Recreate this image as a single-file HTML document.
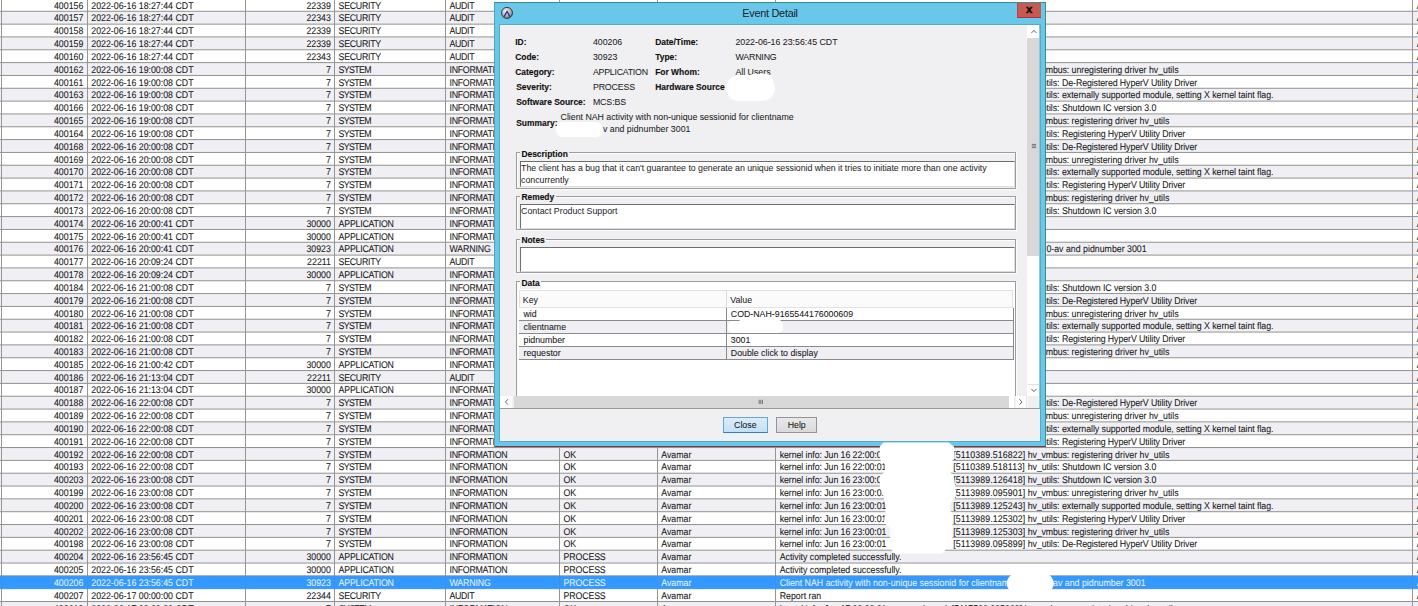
<!DOCTYPE html>
<html lang="en"><head><meta charset="utf-8"><title>Event Detail</title>
<style>
html,body{margin:0;padding:0;background:#fff;}
body{width:1418px;height:606px;overflow:hidden;position:relative;font-family:"Liberation Sans",sans-serif;font-size:8.8px;color:#181818;-webkit-text-stroke:0.07px currentColor;}
#grid{position:absolute;left:0;top:0;width:1418px;height:606px;overflow:hidden;}
#gridbg{position:absolute;left:0;top:0;}
.r{position:absolute;left:0;width:1418px;height:12.83px;white-space:nowrap;transform:scaleY(1.1);text-rendering:geometricPrecision;transform-origin:0 9.46px;}
.r.sel{color:#e6f1ff;-webkit-text-stroke:0.05px currentColor;}
.c{position:absolute;top:0;height:100%;line-height:12.83px;overflow:hidden;box-sizing:border-box;}
.c span{position:absolute;top:0;}

#dlg{position:absolute;left:494px;top:2px;width:552px;height:444.6px;background:#69c8ea;box-sizing:border-box;border:1px solid #3a8c90;border-left-color:#4fa6bb;border-bottom-color:#7a3a4a;}
#ttl{position:absolute;left:494px;top:5.6px;width:552px;text-align:center;font-size:10.9px;line-height:15px;color:#161e2a;letter-spacing:-0.27px;-webkit-text-stroke:0;}
#close{position:absolute;left:1017.3px;top:2.6px;width:24.2px;height:15.5px;background:#c75a50;color:#0c0c0c;text-align:center;text-indent:-1.4px;font-weight:bold;font-size:11.5px;line-height:13px;box-sizing:border-box;border-left:1px solid #b8405a;border-bottom:1px solid #c0284a;-webkit-text-stroke:0.4px currentColor;}
#pane{position:absolute;left:500.3px;top:24.5px;width:539.7px;height:416.5px;background:#f0eff1;overflow:hidden;box-shadow:0 0 0 0.6px #4a9aa6;}
#view{position:absolute;left:0;top:0;width:527.3px;height:371.7px;overflow:hidden;}
.lb{position:absolute;font-weight:bold;font-size:8.45px;white-space:nowrap;line-height:11px;color:#101010;-webkit-text-stroke:0.12px currentColor;}
.vv{position:absolute;white-space:nowrap;line-height:11px;color:#1a1a1a;-webkit-text-stroke:0.04px currentColor;}
.grp{position:absolute;box-sizing:border-box;border:1px solid #9c9c9c;box-shadow:inset 1px 1px 0 0 #fbfbfb, 1px 1px 0 0 #fbfbfb;}
.grp > b{position:absolute;left:3.0px;top:-4.5px;line-height:11px;font-size:8.45px;background:#f0eff1;padding:0 1.4px 0 1.2px;color:#101010;-webkit-text-stroke:0.12px currentColor;}
.ta{position:absolute;box-sizing:border-box;background:#fff;border-top:1.3px solid #6e6e6e;border-left:1.3px solid #6e6e6e;border-right:1px solid #dcdcdc;border-bottom:1px solid #dcdcdc;line-height:11.7px;padding:0.7px 0 0 0.4px;white-space:nowrap;overflow:hidden;color:#1e1e1e;-webkit-text-stroke:0.03px currentColor;}
.blob{position:absolute;background:#fff;border-radius:7px;}
.dr{position:absolute;left:0;width:494.2px;height:12.95px;box-sizing:border-box;border-bottom:1px solid #8a8a8a;background:#fff;line-height:13.8px;white-space:nowrap;}
.dr.g{background:#f0eff4;}
.dr i{font-style:normal;position:absolute;left:4.3px;top:0;}
.dr u{text-decoration:none;position:absolute;left:211.6px;top:0;}
.btn{position:absolute;box-sizing:border-box;text-align:center;line-height:15.2px;color:#1a1a1a;}
</style></head><body>
<div id="grid">
<svg id="gridbg" width="1418" height="606" viewBox="0 0 1418 606" shape-rendering="auto"><rect x="0" y="11.79" width="1418" height="11.83" fill="#f0eff4"/><rect x="0" y="37.45" width="1418" height="11.83" fill="#f0eff4"/><rect x="0" y="63.11" width="1418" height="11.83" fill="#f0eff4"/><rect x="0" y="88.78" width="1418" height="11.83" fill="#f0eff4"/><rect x="0" y="114.44" width="1418" height="11.83" fill="#f0eff4"/><rect x="0" y="140.1" width="1418" height="11.83" fill="#f0eff4"/><rect x="0" y="165.76" width="1418" height="11.83" fill="#f0eff4"/><rect x="0" y="191.42" width="1418" height="11.83" fill="#f0eff4"/><rect x="0" y="217.09" width="1418" height="11.83" fill="#f0eff4"/><rect x="0" y="242.75" width="1418" height="11.83" fill="#f0eff4"/><rect x="0" y="268.41" width="1418" height="11.83" fill="#f0eff4"/><rect x="0" y="294.07" width="1418" height="11.83" fill="#f0eff4"/><rect x="0" y="319.73" width="1418" height="11.83" fill="#f0eff4"/><rect x="0" y="345.4" width="1418" height="11.83" fill="#f0eff4"/><rect x="0" y="371.06" width="1418" height="11.83" fill="#f0eff4"/><rect x="0" y="396.72" width="1418" height="11.83" fill="#f0eff4"/><rect x="0" y="422.38" width="1418" height="11.83" fill="#f0eff4"/><rect x="0" y="448.04" width="1418" height="11.83" fill="#f0eff4"/><rect x="0" y="473.71" width="1418" height="11.83" fill="#f0eff4"/><rect x="0" y="499.37" width="1418" height="11.83" fill="#f0eff4"/><rect x="0" y="525.03" width="1418" height="11.83" fill="#f0eff4"/><rect x="0" y="550.69" width="1418" height="11.83" fill="#f0eff4"/><rect x="0" y="576.35" width="1418" height="11.83" fill="#f0eff4"/><rect x="0" y="602.02" width="1418" height="11.83" fill="#f0eff4"/><rect x="0" y="10.79" width="1418" height="1" fill="#909090"/><rect x="0" y="23.62" width="1418" height="1" fill="#909090"/><rect x="0" y="36.45" width="1418" height="1" fill="#909090"/><rect x="0" y="49.28" width="1418" height="1" fill="#909090"/><rect x="0" y="62.11" width="1418" height="1" fill="#909090"/><rect x="0" y="74.94" width="1418" height="1" fill="#909090"/><rect x="0" y="87.78" width="1418" height="1" fill="#909090"/><rect x="0" y="100.61" width="1418" height="1" fill="#909090"/><rect x="0" y="113.44" width="1418" height="1" fill="#909090"/><rect x="0" y="126.27" width="1418" height="1" fill="#909090"/><rect x="0" y="139.1" width="1418" height="1" fill="#909090"/><rect x="0" y="151.93" width="1418" height="1" fill="#909090"/><rect x="0" y="164.76" width="1418" height="1" fill="#909090"/><rect x="0" y="177.59" width="1418" height="1" fill="#909090"/><rect x="0" y="190.42" width="1418" height="1" fill="#909090"/><rect x="0" y="203.25" width="1418" height="1" fill="#909090"/><rect x="0" y="216.09" width="1418" height="1" fill="#909090"/><rect x="0" y="228.92" width="1418" height="1" fill="#909090"/><rect x="0" y="241.75" width="1418" height="1" fill="#909090"/><rect x="0" y="254.58" width="1418" height="1" fill="#909090"/><rect x="0" y="267.41" width="1418" height="1" fill="#909090"/><rect x="0" y="280.24" width="1418" height="1" fill="#909090"/><rect x="0" y="293.07" width="1418" height="1" fill="#909090"/><rect x="0" y="305.9" width="1418" height="1" fill="#909090"/><rect x="0" y="318.73" width="1418" height="1" fill="#909090"/><rect x="0" y="331.56" width="1418" height="1" fill="#909090"/><rect x="0" y="344.4" width="1418" height="1" fill="#909090"/><rect x="0" y="357.23" width="1418" height="1" fill="#909090"/><rect x="0" y="370.06" width="1418" height="1" fill="#909090"/><rect x="0" y="382.89" width="1418" height="1" fill="#909090"/><rect x="0" y="395.72" width="1418" height="1" fill="#909090"/><rect x="0" y="408.55" width="1418" height="1" fill="#909090"/><rect x="0" y="421.38" width="1418" height="1" fill="#909090"/><rect x="0" y="434.21" width="1418" height="1" fill="#909090"/><rect x="0" y="447.04" width="1418" height="1" fill="#909090"/><rect x="0" y="459.88" width="1418" height="1" fill="#909090"/><rect x="0" y="472.71" width="1418" height="1" fill="#909090"/><rect x="0" y="485.54" width="1418" height="1" fill="#909090"/><rect x="0" y="498.37" width="1418" height="1" fill="#909090"/><rect x="0" y="511.2" width="1418" height="1" fill="#909090"/><rect x="0" y="524.03" width="1418" height="1" fill="#909090"/><rect x="0" y="536.86" width="1418" height="1" fill="#909090"/><rect x="0" y="549.69" width="1418" height="1" fill="#909090"/><rect x="0" y="562.52" width="1418" height="1" fill="#909090"/><rect x="0" y="575.35" width="1418" height="1" fill="#909090"/><rect x="0" y="588.18" width="1418" height="1" fill="#909090"/><rect x="0" y="601.02" width="1418" height="1" fill="#909090"/><rect x="0" y="613.85" width="1418" height="1" fill="#909090"/><rect x="1" y="0" width="1" height="606" fill="#959595"/><rect x="87" y="0" width="1" height="606" fill="#959595"/><rect x="245" y="0" width="1" height="606" fill="#959595"/><rect x="334" y="0" width="1" height="606" fill="#959595"/><rect x="445" y="0" width="1" height="606" fill="#959595"/><rect x="559" y="0" width="1" height="606" fill="#959595"/><rect x="657" y="0" width="1" height="606" fill="#959595"/><rect x="775" y="0" width="1" height="606" fill="#959595"/><rect x="1412" y="0" width="1" height="606" fill="#959595"/><rect x="0" y="575.9" width="1418" height="12.93" fill="#3399ff"/><rect x="1" y="575.9" width="1" height="12.93" fill="#3e92ee"/><rect x="87" y="575.9" width="1" height="12.93" fill="#3e92ee"/><rect x="245" y="575.9" width="1" height="12.93" fill="#3e92ee"/><rect x="334" y="575.9" width="1" height="12.93" fill="#3e92ee"/><rect x="445" y="575.9" width="1" height="12.93" fill="#3e92ee"/><rect x="559" y="575.9" width="1" height="12.93" fill="#3e92ee"/><rect x="657" y="575.9" width="1" height="12.93" fill="#3e92ee"/><rect x="775" y="575.9" width="1" height="12.93" fill="#3e92ee"/><rect x="1412" y="575.9" width="1" height="12.93" fill="#3e92ee"/></svg>
<div class="r" style="top:-0.44px">
<div class="c" style="left:2px;width:85px;text-align:right;padding-right:3.7px">400156</div>
<div class="c" style="left:88px;width:157px;padding-left:3.3px">2022-06-16 18:27:44 CDT</div>
<div class="c" style="left:246px;width:88px;text-align:right;padding-right:3.1px">22339</div>
<div class="c" style="left:335px;width:110px;padding-left:3.6px;letter-spacing:-0.28px">SECURITY</div>
<div class="c" style="left:446px;width:113px;padding-left:3.5px;letter-spacing:-0.32px">AUDIT</div>
<div class="c" style="left:560px;width:97px;padding-left:3.5px;letter-spacing:-0.2px">USER</div>
<div class="c" style="left:658px;width:117px;padding-left:3.2px">Avamar</div>
<div class="c" style="left:776px;width:636px"></div>
<div class="c" style="left:1413px;width:10px;padding-left:3.7px">Avamar</div>
</div>
<div class="r" style="top:12.39px">
<div class="c" style="left:2px;width:85px;text-align:right;padding-right:3.7px">400157</div>
<div class="c" style="left:88px;width:157px;padding-left:3.3px">2022-06-16 18:27:44 CDT</div>
<div class="c" style="left:246px;width:88px;text-align:right;padding-right:3.1px">22343</div>
<div class="c" style="left:335px;width:110px;padding-left:3.6px;letter-spacing:-0.28px">SECURITY</div>
<div class="c" style="left:446px;width:113px;padding-left:3.5px;letter-spacing:-0.32px">AUDIT</div>
<div class="c" style="left:560px;width:97px;padding-left:3.5px;letter-spacing:-0.2px">USER</div>
<div class="c" style="left:658px;width:117px;padding-left:3.2px">Avamar</div>
<div class="c" style="left:776px;width:636px"></div>
<div class="c" style="left:1413px;width:10px;padding-left:3.7px">Avamar</div>
</div>
<div class="r" style="top:25.22px">
<div class="c" style="left:2px;width:85px;text-align:right;padding-right:3.7px">400158</div>
<div class="c" style="left:88px;width:157px;padding-left:3.3px">2022-06-16 18:27:44 CDT</div>
<div class="c" style="left:246px;width:88px;text-align:right;padding-right:3.1px">22339</div>
<div class="c" style="left:335px;width:110px;padding-left:3.6px;letter-spacing:-0.28px">SECURITY</div>
<div class="c" style="left:446px;width:113px;padding-left:3.5px;letter-spacing:-0.32px">AUDIT</div>
<div class="c" style="left:560px;width:97px;padding-left:3.5px;letter-spacing:-0.2px">USER</div>
<div class="c" style="left:658px;width:117px;padding-left:3.2px">Avamar</div>
<div class="c" style="left:776px;width:636px"></div>
<div class="c" style="left:1413px;width:10px;padding-left:3.7px">Avamar</div>
</div>
<div class="r" style="top:38.05px">
<div class="c" style="left:2px;width:85px;text-align:right;padding-right:3.7px">400159</div>
<div class="c" style="left:88px;width:157px;padding-left:3.3px">2022-06-16 18:27:44 CDT</div>
<div class="c" style="left:246px;width:88px;text-align:right;padding-right:3.1px">22339</div>
<div class="c" style="left:335px;width:110px;padding-left:3.6px;letter-spacing:-0.28px">SECURITY</div>
<div class="c" style="left:446px;width:113px;padding-left:3.5px;letter-spacing:-0.32px">AUDIT</div>
<div class="c" style="left:560px;width:97px;padding-left:3.5px;letter-spacing:-0.2px">USER</div>
<div class="c" style="left:658px;width:117px;padding-left:3.2px">Avamar</div>
<div class="c" style="left:776px;width:636px"></div>
<div class="c" style="left:1413px;width:10px;padding-left:3.7px">Avamar</div>
</div>
<div class="r" style="top:50.88px">
<div class="c" style="left:2px;width:85px;text-align:right;padding-right:3.7px">400160</div>
<div class="c" style="left:88px;width:157px;padding-left:3.3px">2022-06-16 18:27:44 CDT</div>
<div class="c" style="left:246px;width:88px;text-align:right;padding-right:3.1px">22343</div>
<div class="c" style="left:335px;width:110px;padding-left:3.6px;letter-spacing:-0.28px">SECURITY</div>
<div class="c" style="left:446px;width:113px;padding-left:3.5px;letter-spacing:-0.32px">AUDIT</div>
<div class="c" style="left:560px;width:97px;padding-left:3.5px;letter-spacing:-0.2px">USER</div>
<div class="c" style="left:658px;width:117px;padding-left:3.2px">Avamar</div>
<div class="c" style="left:776px;width:636px"></div>
<div class="c" style="left:1413px;width:10px;padding-left:3.7px">Avamar</div>
</div>
<div class="r" style="top:63.71px">
<div class="c" style="left:2px;width:85px;text-align:right;padding-right:3.7px">400162</div>
<div class="c" style="left:88px;width:157px;padding-left:3.3px">2022-06-16 19:00:08 CDT</div>
<div class="c" style="left:246px;width:88px;text-align:right;padding-right:3.1px">7</div>
<div class="c" style="left:335px;width:110px;padding-left:3.6px;letter-spacing:-0.62px">SYSTEM</div>
<div class="c" style="left:446px;width:113px;padding-left:3.5px;letter-spacing:-0.28px">INFORMATION</div>
<div class="c" style="left:560px;width:97px;padding-left:3.5px">OK</div>
<div class="c" style="left:658px;width:117px;padding-left:3.2px">Avamar</div>
<div class="c" style="left:776px;width:636px"><span style="left:3.7px;letter-spacing:-0.07px">kernel info: Jun 16 19:00:01</span><span style="left:177.3px;letter-spacing:0.11px">[5099589.095871]</span><span style="left:251.8px;letter-spacing:-0.14px">hv_vmbus:</span><span style="left:295.6px;letter-spacing:-0.02px">unregistering driver hv_utils</span></div>
<div class="c" style="left:1413px;width:10px;padding-left:3.7px">Avamar</div>
</div>
<div class="r" style="top:76.54px">
<div class="c" style="left:2px;width:85px;text-align:right;padding-right:3.7px">400161</div>
<div class="c" style="left:88px;width:157px;padding-left:3.3px">2022-06-16 19:00:08 CDT</div>
<div class="c" style="left:246px;width:88px;text-align:right;padding-right:3.1px">7</div>
<div class="c" style="left:335px;width:110px;padding-left:3.6px;letter-spacing:-0.62px">SYSTEM</div>
<div class="c" style="left:446px;width:113px;padding-left:3.5px;letter-spacing:-0.28px">INFORMATION</div>
<div class="c" style="left:560px;width:97px;padding-left:3.5px">OK</div>
<div class="c" style="left:658px;width:117px;padding-left:3.2px">Avamar</div>
<div class="c" style="left:776px;width:636px"><span style="left:3.7px;letter-spacing:-0.07px">kernel info: Jun 16 19:00:01</span><span style="left:177.3px;letter-spacing:0.11px">[5099589.095869]</span><span style="left:251.8px;letter-spacing:-0.08px">hv_utils:</span><span style="left:286px;letter-spacing:-0.094px">De-Registered HyperV Utility Driver</span></div>
<div class="c" style="left:1413px;width:10px;padding-left:3.7px">Avamar</div>
</div>
<div class="r" style="top:89.38px">
<div class="c" style="left:2px;width:85px;text-align:right;padding-right:3.7px">400163</div>
<div class="c" style="left:88px;width:157px;padding-left:3.3px">2022-06-16 19:00:08 CDT</div>
<div class="c" style="left:246px;width:88px;text-align:right;padding-right:3.1px">7</div>
<div class="c" style="left:335px;width:110px;padding-left:3.6px;letter-spacing:-0.62px">SYSTEM</div>
<div class="c" style="left:446px;width:113px;padding-left:3.5px;letter-spacing:-0.28px">INFORMATION</div>
<div class="c" style="left:560px;width:97px;padding-left:3.5px">OK</div>
<div class="c" style="left:658px;width:117px;padding-left:3.2px">Avamar</div>
<div class="c" style="left:776px;width:636px"><span style="left:3.7px;letter-spacing:-0.07px">kernel info: Jun 16 19:00:01</span><span style="left:177.3px;letter-spacing:0.11px">[5099589.125137]</span><span style="left:251.8px;letter-spacing:-0.08px">hv_utils:</span><span style="left:286px;letter-spacing:-0.048px">externally supported module, setting X kernel taint flag.</span></div>
<div class="c" style="left:1413px;width:10px;padding-left:3.7px">Avamar</div>
</div>
<div class="r" style="top:102.21px">
<div class="c" style="left:2px;width:85px;text-align:right;padding-right:3.7px">400166</div>
<div class="c" style="left:88px;width:157px;padding-left:3.3px">2022-06-16 19:00:08 CDT</div>
<div class="c" style="left:246px;width:88px;text-align:right;padding-right:3.1px">7</div>
<div class="c" style="left:335px;width:110px;padding-left:3.6px;letter-spacing:-0.62px">SYSTEM</div>
<div class="c" style="left:446px;width:113px;padding-left:3.5px;letter-spacing:-0.28px">INFORMATION</div>
<div class="c" style="left:560px;width:97px;padding-left:3.5px">OK</div>
<div class="c" style="left:658px;width:117px;padding-left:3.2px">Avamar</div>
<div class="c" style="left:776px;width:636px"><span style="left:3.7px;letter-spacing:-0.07px">kernel info: Jun 16 19:00:01</span><span style="left:177.3px;letter-spacing:0.11px">[5099589.126312]</span><span style="left:251.8px;letter-spacing:-0.08px">hv_utils:</span><span style="left:286px;letter-spacing:-0.07px">Shutdown IC version 3.0</span></div>
<div class="c" style="left:1413px;width:10px;padding-left:3.7px">Avamar</div>
</div>
<div class="r" style="top:115.04px">
<div class="c" style="left:2px;width:85px;text-align:right;padding-right:3.7px">400165</div>
<div class="c" style="left:88px;width:157px;padding-left:3.3px">2022-06-16 19:00:08 CDT</div>
<div class="c" style="left:246px;width:88px;text-align:right;padding-right:3.1px">7</div>
<div class="c" style="left:335px;width:110px;padding-left:3.6px;letter-spacing:-0.62px">SYSTEM</div>
<div class="c" style="left:446px;width:113px;padding-left:3.5px;letter-spacing:-0.28px">INFORMATION</div>
<div class="c" style="left:560px;width:97px;padding-left:3.5px">OK</div>
<div class="c" style="left:658px;width:117px;padding-left:3.2px">Avamar</div>
<div class="c" style="left:776px;width:636px"><span style="left:3.7px;letter-spacing:-0.07px">kernel info: Jun 16 19:00:01</span><span style="left:177.3px;letter-spacing:0.11px">[5099589.125197]</span><span style="left:251.8px;letter-spacing:-0.14px">hv_vmbus:</span><span style="left:295.6px">registering driver hv_utils</span></div>
<div class="c" style="left:1413px;width:10px;padding-left:3.7px">Avamar</div>
</div>
<div class="r" style="top:127.87px">
<div class="c" style="left:2px;width:85px;text-align:right;padding-right:3.7px">400164</div>
<div class="c" style="left:88px;width:157px;padding-left:3.3px">2022-06-16 19:00:08 CDT</div>
<div class="c" style="left:246px;width:88px;text-align:right;padding-right:3.1px">7</div>
<div class="c" style="left:335px;width:110px;padding-left:3.6px;letter-spacing:-0.62px">SYSTEM</div>
<div class="c" style="left:446px;width:113px;padding-left:3.5px;letter-spacing:-0.28px">INFORMATION</div>
<div class="c" style="left:560px;width:97px;padding-left:3.5px">OK</div>
<div class="c" style="left:658px;width:117px;padding-left:3.2px">Avamar</div>
<div class="c" style="left:776px;width:636px"><span style="left:3.7px;letter-spacing:-0.07px">kernel info: Jun 16 19:00:01</span><span style="left:177.3px;letter-spacing:0.11px">[5099589.125196]</span><span style="left:251.8px;letter-spacing:-0.08px">hv_utils:</span><span style="left:286px;letter-spacing:-0.09px">Registering HyperV Utility Driver</span></div>
<div class="c" style="left:1413px;width:10px;padding-left:3.7px">Avamar</div>
</div>
<div class="r" style="top:140.7px">
<div class="c" style="left:2px;width:85px;text-align:right;padding-right:3.7px">400168</div>
<div class="c" style="left:88px;width:157px;padding-left:3.3px">2022-06-16 20:00:08 CDT</div>
<div class="c" style="left:246px;width:88px;text-align:right;padding-right:3.1px">7</div>
<div class="c" style="left:335px;width:110px;padding-left:3.6px;letter-spacing:-0.62px">SYSTEM</div>
<div class="c" style="left:446px;width:113px;padding-left:3.5px;letter-spacing:-0.28px">INFORMATION</div>
<div class="c" style="left:560px;width:97px;padding-left:3.5px">OK</div>
<div class="c" style="left:658px;width:117px;padding-left:3.2px">Avamar</div>
<div class="c" style="left:776px;width:636px"><span style="left:3.7px;letter-spacing:-0.07px">kernel info: Jun 16 20:00:01</span><span style="left:177.3px;letter-spacing:0.11px">[5103189.095875]</span><span style="left:251.8px;letter-spacing:-0.08px">hv_utils:</span><span style="left:286px;letter-spacing:-0.094px">De-Registered HyperV Utility Driver</span></div>
<div class="c" style="left:1413px;width:10px;padding-left:3.7px">Avamar</div>
</div>
<div class="r" style="top:153.53px">
<div class="c" style="left:2px;width:85px;text-align:right;padding-right:3.7px">400169</div>
<div class="c" style="left:88px;width:157px;padding-left:3.3px">2022-06-16 20:00:08 CDT</div>
<div class="c" style="left:246px;width:88px;text-align:right;padding-right:3.1px">7</div>
<div class="c" style="left:335px;width:110px;padding-left:3.6px;letter-spacing:-0.62px">SYSTEM</div>
<div class="c" style="left:446px;width:113px;padding-left:3.5px;letter-spacing:-0.28px">INFORMATION</div>
<div class="c" style="left:560px;width:97px;padding-left:3.5px">OK</div>
<div class="c" style="left:658px;width:117px;padding-left:3.2px">Avamar</div>
<div class="c" style="left:776px;width:636px"><span style="left:3.7px;letter-spacing:-0.07px">kernel info: Jun 16 20:00:01</span><span style="left:177.3px;letter-spacing:0.11px">[5103189.095877]</span><span style="left:251.8px;letter-spacing:-0.14px">hv_vmbus:</span><span style="left:295.6px;letter-spacing:-0.02px">unregistering driver hv_utils</span></div>
<div class="c" style="left:1413px;width:10px;padding-left:3.7px">Avamar</div>
</div>
<div class="r" style="top:166.36px">
<div class="c" style="left:2px;width:85px;text-align:right;padding-right:3.7px">400170</div>
<div class="c" style="left:88px;width:157px;padding-left:3.3px">2022-06-16 20:00:08 CDT</div>
<div class="c" style="left:246px;width:88px;text-align:right;padding-right:3.1px">7</div>
<div class="c" style="left:335px;width:110px;padding-left:3.6px;letter-spacing:-0.62px">SYSTEM</div>
<div class="c" style="left:446px;width:113px;padding-left:3.5px;letter-spacing:-0.28px">INFORMATION</div>
<div class="c" style="left:560px;width:97px;padding-left:3.5px">OK</div>
<div class="c" style="left:658px;width:117px;padding-left:3.2px">Avamar</div>
<div class="c" style="left:776px;width:636px"><span style="left:3.7px;letter-spacing:-0.07px">kernel info: Jun 16 20:00:01</span><span style="left:177.3px;letter-spacing:0.11px">[5103189.125214]</span><span style="left:251.8px;letter-spacing:-0.08px">hv_utils:</span><span style="left:286px;letter-spacing:-0.048px">externally supported module, setting X kernel taint flag.</span></div>
<div class="c" style="left:1413px;width:10px;padding-left:3.7px">Avamar</div>
</div>
<div class="r" style="top:179.19px">
<div class="c" style="left:2px;width:85px;text-align:right;padding-right:3.7px">400171</div>
<div class="c" style="left:88px;width:157px;padding-left:3.3px">2022-06-16 20:00:08 CDT</div>
<div class="c" style="left:246px;width:88px;text-align:right;padding-right:3.1px">7</div>
<div class="c" style="left:335px;width:110px;padding-left:3.6px;letter-spacing:-0.62px">SYSTEM</div>
<div class="c" style="left:446px;width:113px;padding-left:3.5px;letter-spacing:-0.28px">INFORMATION</div>
<div class="c" style="left:560px;width:97px;padding-left:3.5px">OK</div>
<div class="c" style="left:658px;width:117px;padding-left:3.2px">Avamar</div>
<div class="c" style="left:776px;width:636px"><span style="left:3.7px;letter-spacing:-0.07px">kernel info: Jun 16 20:00:01</span><span style="left:177.3px;letter-spacing:0.11px">[5103189.125273]</span><span style="left:251.8px;letter-spacing:-0.08px">hv_utils:</span><span style="left:286px;letter-spacing:-0.09px">Registering HyperV Utility Driver</span></div>
<div class="c" style="left:1413px;width:10px;padding-left:3.7px">Avamar</div>
</div>
<div class="r" style="top:192.02px">
<div class="c" style="left:2px;width:85px;text-align:right;padding-right:3.7px">400172</div>
<div class="c" style="left:88px;width:157px;padding-left:3.3px">2022-06-16 20:00:08 CDT</div>
<div class="c" style="left:246px;width:88px;text-align:right;padding-right:3.1px">7</div>
<div class="c" style="left:335px;width:110px;padding-left:3.6px;letter-spacing:-0.62px">SYSTEM</div>
<div class="c" style="left:446px;width:113px;padding-left:3.5px;letter-spacing:-0.28px">INFORMATION</div>
<div class="c" style="left:560px;width:97px;padding-left:3.5px">OK</div>
<div class="c" style="left:658px;width:117px;padding-left:3.2px">Avamar</div>
<div class="c" style="left:776px;width:636px"><span style="left:3.7px;letter-spacing:-0.07px">kernel info: Jun 16 20:00:01</span><span style="left:177.3px;letter-spacing:0.11px">[5103189.125274]</span><span style="left:251.8px;letter-spacing:-0.14px">hv_vmbus:</span><span style="left:295.6px">registering driver hv_utils</span></div>
<div class="c" style="left:1413px;width:10px;padding-left:3.7px">Avamar</div>
</div>
<div class="r" style="top:204.85px">
<div class="c" style="left:2px;width:85px;text-align:right;padding-right:3.7px">400173</div>
<div class="c" style="left:88px;width:157px;padding-left:3.3px">2022-06-16 20:00:08 CDT</div>
<div class="c" style="left:246px;width:88px;text-align:right;padding-right:3.1px">7</div>
<div class="c" style="left:335px;width:110px;padding-left:3.6px;letter-spacing:-0.62px">SYSTEM</div>
<div class="c" style="left:446px;width:113px;padding-left:3.5px;letter-spacing:-0.28px">INFORMATION</div>
<div class="c" style="left:560px;width:97px;padding-left:3.5px">OK</div>
<div class="c" style="left:658px;width:117px;padding-left:3.2px">Avamar</div>
<div class="c" style="left:776px;width:636px"><span style="left:3.7px;letter-spacing:-0.07px">kernel info: Jun 16 20:00:01</span><span style="left:177.3px;letter-spacing:0.11px">[5103189.126389]</span><span style="left:251.8px;letter-spacing:-0.08px">hv_utils:</span><span style="left:286px;letter-spacing:-0.07px">Shutdown IC version 3.0</span></div>
<div class="c" style="left:1413px;width:10px;padding-left:3.7px">Avamar</div>
</div>
<div class="r" style="top:217.69px">
<div class="c" style="left:2px;width:85px;text-align:right;padding-right:3.7px">400174</div>
<div class="c" style="left:88px;width:157px;padding-left:3.3px">2022-06-16 20:00:41 CDT</div>
<div class="c" style="left:246px;width:88px;text-align:right;padding-right:3.1px">30000</div>
<div class="c" style="left:335px;width:110px;padding-left:3.6px;letter-spacing:-0.22px">APPLICATION</div>
<div class="c" style="left:446px;width:113px;padding-left:3.5px;letter-spacing:-0.28px">INFORMATION</div>
<div class="c" style="left:560px;width:97px;padding-left:3.5px;letter-spacing:-0.13px">PROCESS</div>
<div class="c" style="left:658px;width:117px;padding-left:3.2px">Avamar</div>
<div class="c" style="left:776px;width:636px"><span style="left:3.7px;letter-spacing:-0.025px">Activity completed successfully.</span></div>
<div class="c" style="left:1413px;width:10px;padding-left:3.7px">Avamar</div>
</div>
<div class="r" style="top:230.52px">
<div class="c" style="left:2px;width:85px;text-align:right;padding-right:3.7px">400175</div>
<div class="c" style="left:88px;width:157px;padding-left:3.3px">2022-06-16 20:00:41 CDT</div>
<div class="c" style="left:246px;width:88px;text-align:right;padding-right:3.1px">30000</div>
<div class="c" style="left:335px;width:110px;padding-left:3.6px;letter-spacing:-0.22px">APPLICATION</div>
<div class="c" style="left:446px;width:113px;padding-left:3.5px;letter-spacing:-0.28px">INFORMATION</div>
<div class="c" style="left:560px;width:97px;padding-left:3.5px;letter-spacing:-0.13px">PROCESS</div>
<div class="c" style="left:658px;width:117px;padding-left:3.2px">Avamar</div>
<div class="c" style="left:776px;width:636px"><span style="left:3.7px;letter-spacing:-0.025px">Activity completed successfully.</span></div>
<div class="c" style="left:1413px;width:10px;padding-left:3.7px">Avamar</div>
</div>
<div class="r" style="top:243.35px">
<div class="c" style="left:2px;width:85px;text-align:right;padding-right:3.7px">400176</div>
<div class="c" style="left:88px;width:157px;padding-left:3.3px">2022-06-16 20:00:41 CDT</div>
<div class="c" style="left:246px;width:88px;text-align:right;padding-right:3.1px">30923</div>
<div class="c" style="left:335px;width:110px;padding-left:3.6px;letter-spacing:-0.22px">APPLICATION</div>
<div class="c" style="left:446px;width:113px;padding-left:3.5px;letter-spacing:-0.15px">WARNING</div>
<div class="c" style="left:560px;width:97px;padding-left:3.5px;letter-spacing:-0.13px">PROCESS</div>
<div class="c" style="left:658px;width:117px;padding-left:3.2px">Avamar</div>
<div class="c" style="left:776px;width:636px"><span style="left:3.7px">Client NAH activity with non-unique sessionid for clientname</span><span style="left:270.4px">0-av and pidnumber 3001</span></div>
<div class="c" style="left:1413px;width:10px;padding-left:3.7px">Avamar</div>
</div>
<div class="r" style="top:256.18px">
<div class="c" style="left:2px;width:85px;text-align:right;padding-right:3.7px">400177</div>
<div class="c" style="left:88px;width:157px;padding-left:3.3px">2022-06-16 20:09:24 CDT</div>
<div class="c" style="left:246px;width:88px;text-align:right;padding-right:3.1px">22211</div>
<div class="c" style="left:335px;width:110px;padding-left:3.6px;letter-spacing:-0.28px">SECURITY</div>
<div class="c" style="left:446px;width:113px;padding-left:3.5px;letter-spacing:-0.32px">AUDIT</div>
<div class="c" style="left:560px;width:97px;padding-left:3.5px;letter-spacing:-0.2px">USER</div>
<div class="c" style="left:658px;width:117px;padding-left:3.2px">Avamar</div>
<div class="c" style="left:776px;width:636px"></div>
<div class="c" style="left:1413px;width:10px;padding-left:3.7px">Avamar</div>
</div>
<div class="r" style="top:269.01px">
<div class="c" style="left:2px;width:85px;text-align:right;padding-right:3.7px">400178</div>
<div class="c" style="left:88px;width:157px;padding-left:3.3px">2022-06-16 20:09:24 CDT</div>
<div class="c" style="left:246px;width:88px;text-align:right;padding-right:3.1px">30000</div>
<div class="c" style="left:335px;width:110px;padding-left:3.6px;letter-spacing:-0.22px">APPLICATION</div>
<div class="c" style="left:446px;width:113px;padding-left:3.5px;letter-spacing:-0.28px">INFORMATION</div>
<div class="c" style="left:560px;width:97px;padding-left:3.5px;letter-spacing:-0.13px">PROCESS</div>
<div class="c" style="left:658px;width:117px;padding-left:3.2px">Avamar</div>
<div class="c" style="left:776px;width:636px"></div>
<div class="c" style="left:1413px;width:10px;padding-left:3.7px">Avamar</div>
</div>
<div class="r" style="top:281.84px">
<div class="c" style="left:2px;width:85px;text-align:right;padding-right:3.7px">400184</div>
<div class="c" style="left:88px;width:157px;padding-left:3.3px">2022-06-16 21:00:08 CDT</div>
<div class="c" style="left:246px;width:88px;text-align:right;padding-right:3.1px">7</div>
<div class="c" style="left:335px;width:110px;padding-left:3.6px;letter-spacing:-0.62px">SYSTEM</div>
<div class="c" style="left:446px;width:113px;padding-left:3.5px;letter-spacing:-0.28px">INFORMATION</div>
<div class="c" style="left:560px;width:97px;padding-left:3.5px">OK</div>
<div class="c" style="left:658px;width:117px;padding-left:3.2px">Avamar</div>
<div class="c" style="left:776px;width:636px"><span style="left:3.7px;letter-spacing:-0.07px">kernel info: Jun 16 21:00:01</span><span style="left:177.3px;letter-spacing:0.11px">[5106789.126401]</span><span style="left:251.8px;letter-spacing:-0.08px">hv_utils:</span><span style="left:286px;letter-spacing:-0.07px">Shutdown IC version 3.0</span></div>
<div class="c" style="left:1413px;width:10px;padding-left:3.7px">Avamar</div>
</div>
<div class="r" style="top:294.67px">
<div class="c" style="left:2px;width:85px;text-align:right;padding-right:3.7px">400179</div>
<div class="c" style="left:88px;width:157px;padding-left:3.3px">2022-06-16 21:00:08 CDT</div>
<div class="c" style="left:246px;width:88px;text-align:right;padding-right:3.1px">7</div>
<div class="c" style="left:335px;width:110px;padding-left:3.6px;letter-spacing:-0.62px">SYSTEM</div>
<div class="c" style="left:446px;width:113px;padding-left:3.5px;letter-spacing:-0.28px">INFORMATION</div>
<div class="c" style="left:560px;width:97px;padding-left:3.5px">OK</div>
<div class="c" style="left:658px;width:117px;padding-left:3.2px">Avamar</div>
<div class="c" style="left:776px;width:636px"><span style="left:3.7px;letter-spacing:-0.07px">kernel info: Jun 16 21:00:01</span><span style="left:177.3px;letter-spacing:0.11px">[5106789.095883]</span><span style="left:251.8px;letter-spacing:-0.08px">hv_utils:</span><span style="left:286px;letter-spacing:-0.094px">De-Registered HyperV Utility Driver</span></div>
<div class="c" style="left:1413px;width:10px;padding-left:3.7px">Avamar</div>
</div>
<div class="r" style="top:307.5px">
<div class="c" style="left:2px;width:85px;text-align:right;padding-right:3.7px">400180</div>
<div class="c" style="left:88px;width:157px;padding-left:3.3px">2022-06-16 21:00:08 CDT</div>
<div class="c" style="left:246px;width:88px;text-align:right;padding-right:3.1px">7</div>
<div class="c" style="left:335px;width:110px;padding-left:3.6px;letter-spacing:-0.62px">SYSTEM</div>
<div class="c" style="left:446px;width:113px;padding-left:3.5px;letter-spacing:-0.28px">INFORMATION</div>
<div class="c" style="left:560px;width:97px;padding-left:3.5px">OK</div>
<div class="c" style="left:658px;width:117px;padding-left:3.2px">Avamar</div>
<div class="c" style="left:776px;width:636px"><span style="left:3.7px;letter-spacing:-0.07px">kernel info: Jun 16 21:00:01</span><span style="left:177.3px;letter-spacing:0.11px">[5106789.095885]</span><span style="left:251.8px;letter-spacing:-0.14px">hv_vmbus:</span><span style="left:295.6px;letter-spacing:-0.02px">unregistering driver hv_utils</span></div>
<div class="c" style="left:1413px;width:10px;padding-left:3.7px">Avamar</div>
</div>
<div class="r" style="top:320.33px">
<div class="c" style="left:2px;width:85px;text-align:right;padding-right:3.7px">400181</div>
<div class="c" style="left:88px;width:157px;padding-left:3.3px">2022-06-16 21:00:08 CDT</div>
<div class="c" style="left:246px;width:88px;text-align:right;padding-right:3.1px">7</div>
<div class="c" style="left:335px;width:110px;padding-left:3.6px;letter-spacing:-0.62px">SYSTEM</div>
<div class="c" style="left:446px;width:113px;padding-left:3.5px;letter-spacing:-0.28px">INFORMATION</div>
<div class="c" style="left:560px;width:97px;padding-left:3.5px">OK</div>
<div class="c" style="left:658px;width:117px;padding-left:3.2px">Avamar</div>
<div class="c" style="left:776px;width:636px"><span style="left:3.7px;letter-spacing:-0.07px">kernel info: Jun 16 21:00:01</span><span style="left:177.3px;letter-spacing:0.11px">[5106789.125226]</span><span style="left:251.8px;letter-spacing:-0.08px">hv_utils:</span><span style="left:286px;letter-spacing:-0.048px">externally supported module, setting X kernel taint flag.</span></div>
<div class="c" style="left:1413px;width:10px;padding-left:3.7px">Avamar</div>
</div>
<div class="r" style="top:333.17px">
<div class="c" style="left:2px;width:85px;text-align:right;padding-right:3.7px">400182</div>
<div class="c" style="left:88px;width:157px;padding-left:3.3px">2022-06-16 21:00:08 CDT</div>
<div class="c" style="left:246px;width:88px;text-align:right;padding-right:3.1px">7</div>
<div class="c" style="left:335px;width:110px;padding-left:3.6px;letter-spacing:-0.62px">SYSTEM</div>
<div class="c" style="left:446px;width:113px;padding-left:3.5px;letter-spacing:-0.28px">INFORMATION</div>
<div class="c" style="left:560px;width:97px;padding-left:3.5px">OK</div>
<div class="c" style="left:658px;width:117px;padding-left:3.2px">Avamar</div>
<div class="c" style="left:776px;width:636px"><span style="left:3.7px;letter-spacing:-0.07px">kernel info: Jun 16 21:00:01</span><span style="left:177.3px;letter-spacing:0.11px">[5106789.125285]</span><span style="left:251.8px;letter-spacing:-0.08px">hv_utils:</span><span style="left:286px;letter-spacing:-0.09px">Registering HyperV Utility Driver</span></div>
<div class="c" style="left:1413px;width:10px;padding-left:3.7px">Avamar</div>
</div>
<div class="r" style="top:346px">
<div class="c" style="left:2px;width:85px;text-align:right;padding-right:3.7px">400183</div>
<div class="c" style="left:88px;width:157px;padding-left:3.3px">2022-06-16 21:00:08 CDT</div>
<div class="c" style="left:246px;width:88px;text-align:right;padding-right:3.1px">7</div>
<div class="c" style="left:335px;width:110px;padding-left:3.6px;letter-spacing:-0.62px">SYSTEM</div>
<div class="c" style="left:446px;width:113px;padding-left:3.5px;letter-spacing:-0.28px">INFORMATION</div>
<div class="c" style="left:560px;width:97px;padding-left:3.5px">OK</div>
<div class="c" style="left:658px;width:117px;padding-left:3.2px">Avamar</div>
<div class="c" style="left:776px;width:636px"><span style="left:3.7px;letter-spacing:-0.07px">kernel info: Jun 16 21:00:01</span><span style="left:177.3px;letter-spacing:0.11px">[5106789.125286]</span><span style="left:251.8px;letter-spacing:-0.14px">hv_vmbus:</span><span style="left:295.6px">registering driver hv_utils</span></div>
<div class="c" style="left:1413px;width:10px;padding-left:3.7px">Avamar</div>
</div>
<div class="r" style="top:358.83px">
<div class="c" style="left:2px;width:85px;text-align:right;padding-right:3.7px">400185</div>
<div class="c" style="left:88px;width:157px;padding-left:3.3px">2022-06-16 21:00:42 CDT</div>
<div class="c" style="left:246px;width:88px;text-align:right;padding-right:3.1px">30000</div>
<div class="c" style="left:335px;width:110px;padding-left:3.6px;letter-spacing:-0.22px">APPLICATION</div>
<div class="c" style="left:446px;width:113px;padding-left:3.5px;letter-spacing:-0.28px">INFORMATION</div>
<div class="c" style="left:560px;width:97px;padding-left:3.5px;letter-spacing:-0.13px">PROCESS</div>
<div class="c" style="left:658px;width:117px;padding-left:3.2px">Avamar</div>
<div class="c" style="left:776px;width:636px"></div>
<div class="c" style="left:1413px;width:10px;padding-left:3.7px">Avamar</div>
</div>
<div class="r" style="top:371.66px">
<div class="c" style="left:2px;width:85px;text-align:right;padding-right:3.7px">400186</div>
<div class="c" style="left:88px;width:157px;padding-left:3.3px">2022-06-16 21:13:04 CDT</div>
<div class="c" style="left:246px;width:88px;text-align:right;padding-right:3.1px">22211</div>
<div class="c" style="left:335px;width:110px;padding-left:3.6px;letter-spacing:-0.28px">SECURITY</div>
<div class="c" style="left:446px;width:113px;padding-left:3.5px;letter-spacing:-0.32px">AUDIT</div>
<div class="c" style="left:560px;width:97px;padding-left:3.5px;letter-spacing:-0.2px">USER</div>
<div class="c" style="left:658px;width:117px;padding-left:3.2px">Avamar</div>
<div class="c" style="left:776px;width:636px"></div>
<div class="c" style="left:1413px;width:10px;padding-left:3.7px">Avamar</div>
</div>
<div class="r" style="top:384.49px">
<div class="c" style="left:2px;width:85px;text-align:right;padding-right:3.7px">400187</div>
<div class="c" style="left:88px;width:157px;padding-left:3.3px">2022-06-16 21:13:04 CDT</div>
<div class="c" style="left:246px;width:88px;text-align:right;padding-right:3.1px">30000</div>
<div class="c" style="left:335px;width:110px;padding-left:3.6px;letter-spacing:-0.22px">APPLICATION</div>
<div class="c" style="left:446px;width:113px;padding-left:3.5px;letter-spacing:-0.28px">INFORMATION</div>
<div class="c" style="left:560px;width:97px;padding-left:3.5px;letter-spacing:-0.13px">PROCESS</div>
<div class="c" style="left:658px;width:117px;padding-left:3.2px">Avamar</div>
<div class="c" style="left:776px;width:636px"></div>
<div class="c" style="left:1413px;width:10px;padding-left:3.7px">Avamar</div>
</div>
<div class="r" style="top:397.32px">
<div class="c" style="left:2px;width:85px;text-align:right;padding-right:3.7px">400188</div>
<div class="c" style="left:88px;width:157px;padding-left:3.3px">2022-06-16 22:00:08 CDT</div>
<div class="c" style="left:246px;width:88px;text-align:right;padding-right:3.1px">7</div>
<div class="c" style="left:335px;width:110px;padding-left:3.6px;letter-spacing:-0.62px">SYSTEM</div>
<div class="c" style="left:446px;width:113px;padding-left:3.5px;letter-spacing:-0.28px">INFORMATION</div>
<div class="c" style="left:560px;width:97px;padding-left:3.5px">OK</div>
<div class="c" style="left:658px;width:117px;padding-left:3.2px">Avamar</div>
<div class="c" style="left:776px;width:636px"><span style="left:3.7px;letter-spacing:-0.07px">kernel info: Jun 16 22:00:01</span><span style="left:177.3px;letter-spacing:0.11px">[5110389.095890]</span><span style="left:251.8px;letter-spacing:-0.08px">hv_utils:</span><span style="left:286px;letter-spacing:-0.094px">De-Registered HyperV Utility Driver</span></div>
<div class="c" style="left:1413px;width:10px;padding-left:3.7px">Avamar</div>
</div>
<div class="r" style="top:410.15px">
<div class="c" style="left:2px;width:85px;text-align:right;padding-right:3.7px">400189</div>
<div class="c" style="left:88px;width:157px;padding-left:3.3px">2022-06-16 22:00:08 CDT</div>
<div class="c" style="left:246px;width:88px;text-align:right;padding-right:3.1px">7</div>
<div class="c" style="left:335px;width:110px;padding-left:3.6px;letter-spacing:-0.62px">SYSTEM</div>
<div class="c" style="left:446px;width:113px;padding-left:3.5px;letter-spacing:-0.28px">INFORMATION</div>
<div class="c" style="left:560px;width:97px;padding-left:3.5px">OK</div>
<div class="c" style="left:658px;width:117px;padding-left:3.2px">Avamar</div>
<div class="c" style="left:776px;width:636px"><span style="left:3.7px;letter-spacing:-0.07px">kernel info: Jun 16 22:00:01</span><span style="left:177.3px;letter-spacing:0.11px">[5110389.095892]</span><span style="left:251.8px;letter-spacing:-0.14px">hv_vmbus:</span><span style="left:295.6px;letter-spacing:-0.02px">unregistering driver hv_utils</span></div>
<div class="c" style="left:1413px;width:10px;padding-left:3.7px">Avamar</div>
</div>
<div class="r" style="top:422.98px">
<div class="c" style="left:2px;width:85px;text-align:right;padding-right:3.7px">400190</div>
<div class="c" style="left:88px;width:157px;padding-left:3.3px">2022-06-16 22:00:08 CDT</div>
<div class="c" style="left:246px;width:88px;text-align:right;padding-right:3.1px">7</div>
<div class="c" style="left:335px;width:110px;padding-left:3.6px;letter-spacing:-0.62px">SYSTEM</div>
<div class="c" style="left:446px;width:113px;padding-left:3.5px;letter-spacing:-0.28px">INFORMATION</div>
<div class="c" style="left:560px;width:97px;padding-left:3.5px">OK</div>
<div class="c" style="left:658px;width:117px;padding-left:3.2px">Avamar</div>
<div class="c" style="left:776px;width:636px"><span style="left:3.7px;letter-spacing:-0.07px">kernel info: Jun 16 22:00:01</span><span style="left:177.3px;letter-spacing:0.11px">[5110389.516762]</span><span style="left:251.8px;letter-spacing:-0.08px">hv_utils:</span><span style="left:286px;letter-spacing:-0.048px">externally supported module, setting X kernel taint flag.</span></div>
<div class="c" style="left:1413px;width:10px;padding-left:3.7px">Avamar</div>
</div>
<div class="r" style="top:435.81px">
<div class="c" style="left:2px;width:85px;text-align:right;padding-right:3.7px">400191</div>
<div class="c" style="left:88px;width:157px;padding-left:3.3px">2022-06-16 22:00:08 CDT</div>
<div class="c" style="left:246px;width:88px;text-align:right;padding-right:3.1px">7</div>
<div class="c" style="left:335px;width:110px;padding-left:3.6px;letter-spacing:-0.62px">SYSTEM</div>
<div class="c" style="left:446px;width:113px;padding-left:3.5px;letter-spacing:-0.28px">INFORMATION</div>
<div class="c" style="left:560px;width:97px;padding-left:3.5px">OK</div>
<div class="c" style="left:658px;width:117px;padding-left:3.2px">Avamar</div>
<div class="c" style="left:776px;width:636px"><span style="left:3.7px;letter-spacing:-0.07px">kernel info: Jun 16 22:00:01</span><span style="left:177.3px;letter-spacing:0.11px">[5110389.516821]</span><span style="left:251.8px;letter-spacing:-0.08px">hv_utils:</span><span style="left:286px;letter-spacing:-0.09px">Registering HyperV Utility Driver</span></div>
<div class="c" style="left:1413px;width:10px;padding-left:3.7px">Avamar</div>
</div>
<div class="r" style="top:448.64px">
<div class="c" style="left:2px;width:85px;text-align:right;padding-right:3.7px">400192</div>
<div class="c" style="left:88px;width:157px;padding-left:3.3px">2022-06-16 22:00:08 CDT</div>
<div class="c" style="left:246px;width:88px;text-align:right;padding-right:3.1px">7</div>
<div class="c" style="left:335px;width:110px;padding-left:3.6px;letter-spacing:-0.62px">SYSTEM</div>
<div class="c" style="left:446px;width:113px;padding-left:3.5px;letter-spacing:-0.28px">INFORMATION</div>
<div class="c" style="left:560px;width:97px;padding-left:3.5px">OK</div>
<div class="c" style="left:658px;width:117px;padding-left:3.2px">Avamar</div>
<div class="c" style="left:776px;width:636px"><span style="left:3.7px;letter-spacing:-0.07px">kernel info: Jun 16 22:00:01</span><span style="left:177.3px;letter-spacing:0.11px">[5110389.516822]</span><span style="left:251.8px;letter-spacing:-0.14px">hv_vmbus:</span><span style="left:295.6px">registering driver hv_utils</span></div>
<div class="c" style="left:1413px;width:10px;padding-left:3.7px">Avamar</div>
</div>
<div class="r" style="top:461.48px">
<div class="c" style="left:2px;width:85px;text-align:right;padding-right:3.7px">400193</div>
<div class="c" style="left:88px;width:157px;padding-left:3.3px">2022-06-16 22:00:08 CDT</div>
<div class="c" style="left:246px;width:88px;text-align:right;padding-right:3.1px">7</div>
<div class="c" style="left:335px;width:110px;padding-left:3.6px;letter-spacing:-0.62px">SYSTEM</div>
<div class="c" style="left:446px;width:113px;padding-left:3.5px;letter-spacing:-0.28px">INFORMATION</div>
<div class="c" style="left:560px;width:97px;padding-left:3.5px">OK</div>
<div class="c" style="left:658px;width:117px;padding-left:3.2px">Avamar</div>
<div class="c" style="left:776px;width:636px"><span style="left:3.7px;letter-spacing:-0.07px">kernel info: Jun 16 22:00:01</span><span style="left:177.3px;letter-spacing:0.11px">[5110389.518113]</span><span style="left:251.8px;letter-spacing:-0.08px">hv_utils:</span><span style="left:286px;letter-spacing:-0.07px">Shutdown IC version 3.0</span></div>
<div class="c" style="left:1413px;width:10px;padding-left:3.7px">Avamar</div>
</div>
<div class="r" style="top:474.31px">
<div class="c" style="left:2px;width:85px;text-align:right;padding-right:3.7px">400203</div>
<div class="c" style="left:88px;width:157px;padding-left:3.3px">2022-06-16 23:00:08 CDT</div>
<div class="c" style="left:246px;width:88px;text-align:right;padding-right:3.1px">7</div>
<div class="c" style="left:335px;width:110px;padding-left:3.6px;letter-spacing:-0.62px">SYSTEM</div>
<div class="c" style="left:446px;width:113px;padding-left:3.5px;letter-spacing:-0.28px">INFORMATION</div>
<div class="c" style="left:560px;width:97px;padding-left:3.5px">OK</div>
<div class="c" style="left:658px;width:117px;padding-left:3.2px">Avamar</div>
<div class="c" style="left:776px;width:636px"><span style="left:3.7px;letter-spacing:-0.07px">kernel info: Jun 16 23:00:01</span><span style="left:177.3px;letter-spacing:0.11px">[5113989.126418]</span><span style="left:251.8px;letter-spacing:-0.08px">hv_utils:</span><span style="left:286px;letter-spacing:-0.07px">Shutdown IC version 3.0</span></div>
<div class="c" style="left:1413px;width:10px;padding-left:3.7px">Avamar</div>
</div>
<div class="r" style="top:487.14px">
<div class="c" style="left:2px;width:85px;text-align:right;padding-right:3.7px">400199</div>
<div class="c" style="left:88px;width:157px;padding-left:3.3px">2022-06-16 23:00:08 CDT</div>
<div class="c" style="left:246px;width:88px;text-align:right;padding-right:3.1px">7</div>
<div class="c" style="left:335px;width:110px;padding-left:3.6px;letter-spacing:-0.62px">SYSTEM</div>
<div class="c" style="left:446px;width:113px;padding-left:3.5px;letter-spacing:-0.28px">INFORMATION</div>
<div class="c" style="left:560px;width:97px;padding-left:3.5px">OK</div>
<div class="c" style="left:658px;width:117px;padding-left:3.2px">Avamar</div>
<div class="c" style="left:776px;width:636px"><span style="left:3.7px;letter-spacing:-0.07px">kernel info: Jun 16 23:00:01</span><span style="left:177.3px;letter-spacing:0.11px">[5113989.095901]</span><span style="left:251.8px;letter-spacing:-0.14px">hv_vmbus:</span><span style="left:295.6px;letter-spacing:-0.02px">unregistering driver hv_utils</span></div>
<div class="c" style="left:1413px;width:10px;padding-left:3.7px">Avamar</div>
</div>
<div class="r" style="top:499.97px">
<div class="c" style="left:2px;width:85px;text-align:right;padding-right:3.7px">400200</div>
<div class="c" style="left:88px;width:157px;padding-left:3.3px">2022-06-16 23:00:08 CDT</div>
<div class="c" style="left:246px;width:88px;text-align:right;padding-right:3.1px">7</div>
<div class="c" style="left:335px;width:110px;padding-left:3.6px;letter-spacing:-0.62px">SYSTEM</div>
<div class="c" style="left:446px;width:113px;padding-left:3.5px;letter-spacing:-0.28px">INFORMATION</div>
<div class="c" style="left:560px;width:97px;padding-left:3.5px">OK</div>
<div class="c" style="left:658px;width:117px;padding-left:3.2px">Avamar</div>
<div class="c" style="left:776px;width:636px"><span style="left:3.7px;letter-spacing:-0.07px">kernel info: Jun 16 23:00:01</span><span style="left:177.3px;letter-spacing:0.11px">[5113989.125243]</span><span style="left:251.8px;letter-spacing:-0.08px">hv_utils:</span><span style="left:286px;letter-spacing:-0.048px">externally supported module, setting X kernel taint flag.</span></div>
<div class="c" style="left:1413px;width:10px;padding-left:3.7px">Avamar</div>
</div>
<div class="r" style="top:512.8px">
<div class="c" style="left:2px;width:85px;text-align:right;padding-right:3.7px">400201</div>
<div class="c" style="left:88px;width:157px;padding-left:3.3px">2022-06-16 23:00:08 CDT</div>
<div class="c" style="left:246px;width:88px;text-align:right;padding-right:3.1px">7</div>
<div class="c" style="left:335px;width:110px;padding-left:3.6px;letter-spacing:-0.62px">SYSTEM</div>
<div class="c" style="left:446px;width:113px;padding-left:3.5px;letter-spacing:-0.28px">INFORMATION</div>
<div class="c" style="left:560px;width:97px;padding-left:3.5px">OK</div>
<div class="c" style="left:658px;width:117px;padding-left:3.2px">Avamar</div>
<div class="c" style="left:776px;width:636px"><span style="left:3.7px;letter-spacing:-0.07px">kernel info: Jun 16 23:00:01</span><span style="left:177.3px;letter-spacing:0.11px">[5113989.125302]</span><span style="left:251.8px;letter-spacing:-0.08px">hv_utils:</span><span style="left:286px;letter-spacing:-0.09px">Registering HyperV Utility Driver</span></div>
<div class="c" style="left:1413px;width:10px;padding-left:3.7px">Avamar</div>
</div>
<div class="r" style="top:525.63px">
<div class="c" style="left:2px;width:85px;text-align:right;padding-right:3.7px">400202</div>
<div class="c" style="left:88px;width:157px;padding-left:3.3px">2022-06-16 23:00:08 CDT</div>
<div class="c" style="left:246px;width:88px;text-align:right;padding-right:3.1px">7</div>
<div class="c" style="left:335px;width:110px;padding-left:3.6px;letter-spacing:-0.62px">SYSTEM</div>
<div class="c" style="left:446px;width:113px;padding-left:3.5px;letter-spacing:-0.28px">INFORMATION</div>
<div class="c" style="left:560px;width:97px;padding-left:3.5px">OK</div>
<div class="c" style="left:658px;width:117px;padding-left:3.2px">Avamar</div>
<div class="c" style="left:776px;width:636px"><span style="left:3.7px;letter-spacing:-0.07px">kernel info: Jun 16 23:00:01</span><span style="left:177.3px;letter-spacing:0.11px">[5113989.125303]</span><span style="left:251.8px;letter-spacing:-0.14px">hv_vmbus:</span><span style="left:295.6px">registering driver hv_utils</span></div>
<div class="c" style="left:1413px;width:10px;padding-left:3.7px">Avamar</div>
</div>
<div class="r" style="top:538.46px">
<div class="c" style="left:2px;width:85px;text-align:right;padding-right:3.7px">400198</div>
<div class="c" style="left:88px;width:157px;padding-left:3.3px">2022-06-16 23:00:08 CDT</div>
<div class="c" style="left:246px;width:88px;text-align:right;padding-right:3.1px">7</div>
<div class="c" style="left:335px;width:110px;padding-left:3.6px;letter-spacing:-0.62px">SYSTEM</div>
<div class="c" style="left:446px;width:113px;padding-left:3.5px;letter-spacing:-0.28px">INFORMATION</div>
<div class="c" style="left:560px;width:97px;padding-left:3.5px">OK</div>
<div class="c" style="left:658px;width:117px;padding-left:3.2px">Avamar</div>
<div class="c" style="left:776px;width:636px"><span style="left:3.7px;letter-spacing:-0.07px">kernel info: Jun 16 23:00:01</span><span style="left:177.3px;letter-spacing:0.11px">[5113989.095899]</span><span style="left:251.8px;letter-spacing:-0.08px">hv_utils:</span><span style="left:286px;letter-spacing:-0.094px">De-Registered HyperV Utility Driver</span></div>
<div class="c" style="left:1413px;width:10px;padding-left:3.7px">Avamar</div>
</div>
<div class="r" style="top:551.29px">
<div class="c" style="left:2px;width:85px;text-align:right;padding-right:3.7px">400204</div>
<div class="c" style="left:88px;width:157px;padding-left:3.3px">2022-06-16 23:56:45 CDT</div>
<div class="c" style="left:246px;width:88px;text-align:right;padding-right:3.1px">30000</div>
<div class="c" style="left:335px;width:110px;padding-left:3.6px;letter-spacing:-0.22px">APPLICATION</div>
<div class="c" style="left:446px;width:113px;padding-left:3.5px;letter-spacing:-0.28px">INFORMATION</div>
<div class="c" style="left:560px;width:97px;padding-left:3.5px;letter-spacing:-0.13px">PROCESS</div>
<div class="c" style="left:658px;width:117px;padding-left:3.2px">Avamar</div>
<div class="c" style="left:776px;width:636px"><span style="left:3.7px;letter-spacing:-0.025px">Activity completed successfully.</span></div>
<div class="c" style="left:1413px;width:10px;padding-left:3.7px">Avamar</div>
</div>
<div class="r" style="top:564.12px">
<div class="c" style="left:2px;width:85px;text-align:right;padding-right:3.7px">400205</div>
<div class="c" style="left:88px;width:157px;padding-left:3.3px">2022-06-16 23:56:45 CDT</div>
<div class="c" style="left:246px;width:88px;text-align:right;padding-right:3.1px">30000</div>
<div class="c" style="left:335px;width:110px;padding-left:3.6px;letter-spacing:-0.22px">APPLICATION</div>
<div class="c" style="left:446px;width:113px;padding-left:3.5px;letter-spacing:-0.28px">INFORMATION</div>
<div class="c" style="left:560px;width:97px;padding-left:3.5px;letter-spacing:-0.13px">PROCESS</div>
<div class="c" style="left:658px;width:117px;padding-left:3.2px">Avamar</div>
<div class="c" style="left:776px;width:636px"><span style="left:3.7px;letter-spacing:-0.025px">Activity completed successfully.</span></div>
<div class="c" style="left:1413px;width:10px;padding-left:3.7px">Avamar</div>
</div>
<div class="r sel" style="top:576.95px">
<div class="c" style="left:2px;width:85px;text-align:right;padding-right:3.7px">400206</div>
<div class="c" style="left:88px;width:157px;padding-left:3.3px">2022-06-16 23:56:45 CDT</div>
<div class="c" style="left:246px;width:88px;text-align:right;padding-right:3.1px">30923</div>
<div class="c" style="left:335px;width:110px;padding-left:3.6px;letter-spacing:-0.22px">APPLICATION</div>
<div class="c" style="left:446px;width:113px;padding-left:3.5px;letter-spacing:-0.15px">WARNING</div>
<div class="c" style="left:560px;width:97px;padding-left:3.5px;letter-spacing:-0.13px">PROCESS</div>
<div class="c" style="left:658px;width:117px;padding-left:3.2px">Avamar</div>
<div class="c" style="left:776px;width:636px"><span style="left:3.7px">Client NAH activity with non-unique sessionid for clientname</span><span style="left:277.1px">av and pidnumber 3001</span></div>
<div class="c" style="left:1413px;width:10px;padding-left:3.7px">Avamar</div>
</div>
<div class="r" style="top:589.78px">
<div class="c" style="left:2px;width:85px;text-align:right;padding-right:3.7px">400207</div>
<div class="c" style="left:88px;width:157px;padding-left:3.3px">2022-06-17 00:00:00 CDT</div>
<div class="c" style="left:246px;width:88px;text-align:right;padding-right:3.1px">22344</div>
<div class="c" style="left:335px;width:110px;padding-left:3.6px;letter-spacing:-0.28px">SECURITY</div>
<div class="c" style="left:446px;width:113px;padding-left:3.5px;letter-spacing:-0.32px">AUDIT</div>
<div class="c" style="left:560px;width:97px;padding-left:3.5px;letter-spacing:-0.13px">PROCESS</div>
<div class="c" style="left:658px;width:117px;padding-left:3.2px">Avamar</div>
<div class="c" style="left:776px;width:636px"><span style="left:3.7px">Report ran</span></div>
<div class="c" style="left:1413px;width:10px;padding-left:3.7px">Avamar</div>
</div>
<div class="r" style="top:602.62px">
<div class="c" style="left:2px;width:85px;text-align:right;padding-right:3.7px">400210</div>
<div class="c" style="left:88px;width:157px;padding-left:3.3px">2022-06-17 00:00:08 CDT</div>
<div class="c" style="left:246px;width:88px;text-align:right;padding-right:3.1px">7</div>
<div class="c" style="left:335px;width:110px;padding-left:3.6px;letter-spacing:-0.62px">SYSTEM</div>
<div class="c" style="left:446px;width:113px;padding-left:3.5px;letter-spacing:-0.28px">INFORMATION</div>
<div class="c" style="left:560px;width:97px;padding-left:3.5px">OK</div>
<div class="c" style="left:658px;width:117px;padding-left:3.2px">Avamar</div>
<div class="c" style="left:776px;width:636px"><span style="left:3.7px;letter-spacing:-0.07px">kernel info: Jun 17 00:00:01</span><span style="left:147px">kernel: [5117589.095909] hv_vmbus: unregistering driver hv_utils</span></div>
<div class="c" style="left:1413px;width:10px;padding-left:3.7px">Avamar</div>
</div>
</div>
<div id="dlg"></div>
<div id="ttl">Event Detail</div>
<svg style="position:absolute;left:500px;top:6px" width="14" height="14" viewBox="0 0 14 14">
 <defs><radialGradient id="sph" cx="0.38" cy="0.32" r="0.75"><stop offset="0" stop-color="#f2f2ee"/><stop offset="0.55" stop-color="#b4b6b0"/><stop offset="1" stop-color="#6c6e6a"/></radialGradient></defs>
 <circle cx="7" cy="6.9" r="5.5" fill="url(#sph)" stroke="#2c2c38" stroke-width="0.9"/>
 <path d="M4 10.8 L7 5.5 L10 10.8" fill="none" stroke="#2626a8" stroke-width="1.25" stroke-linejoin="miter"/>
</svg>
<div id="close">x</div>
<div id="pane">
 <div id="view">
  <div class="lb" style="left:14.9px;top:12.2px">ID:</div>
  <div class="lb" style="left:14.9px;top:27.2px">Code:</div>
  <div class="lb" style="left:14.9px;top:42.2px">Category:</div>
  <div class="lb" style="left:15.9px;top:57.2px">Severity:</div>
  <div class="lb" style="left:15.9px;top:72.2px">Software Source:</div>
  <div class="lb" style="left:15.9px;top:93.2px">Summary:</div>
  <div class="vv" style="left:92.6px;top:12.2px">400206</div>
  <div class="vv" style="left:92.6px;top:27.2px">30923</div>
  <div class="vv" style="left:92.6px;top:42.2px;letter-spacing:-0.24px">APPLICATION</div>
  <div class="vv" style="left:92.6px;top:57.2px;letter-spacing:-0.13px">PROCESS</div>
  <div class="vv" style="left:92.6px;top:72.2px;letter-spacing:-0.1px">MCS:BS</div>
  <div class="lb" style="left:154.9px;top:12.2px">Date/Time:</div>
  <div class="lb" style="left:154.9px;top:27.2px">Type:</div>
  <div class="lb" style="left:154.9px;top:42.2px">For Whom:</div>
  <div class="lb" style="left:154.9px;top:57.2px">Hardware Source</div>
  <div class="vv" style="left:235.1px;top:12.2px">2022-06-16 23:56:45 CDT</div>
  <div class="vv" style="left:235.1px;top:27.2px;letter-spacing:-0.15px">WARNING</div>
  <div class="vv" style="left:235.1px;top:42.2px">All Users</div>
  <div class="vv" style="left:60.3px;top:87.4px;letter-spacing:-0.02px">Client NAH activity with non-unique sessionid for clientname</div>
  <div class="vv" style="left:102.6px;top:99.2px">v and pidnumber 3001</div>
  <div class="blob" style="left:225.4px;top:50.8px;width:49.5px;height:25.8px;border-radius:13px"></div><div class="blob" style="left:247px;top:49.8px;width:26px;height:12px;border-radius:6px"></div>
  <div class="blob" style="left:55.8px;top:97.4px;width:47.4px;height:15px;border-radius:7px"></div>

  <div class="grp" style="left:15.9px;top:127.7px;width:499.8px;height:36.5px"><b>Description</b></div>
  <div class="ta" style="left:19.4px;top:136.8px;width:495.4px;height:25.6px;letter-spacing:-0.025px"><div>The client has a bug that it can't guarantee to generate an unique sessionid when it tries to initiate more than one activity</div><div>concurrently</div></div>
  <div class="grp" style="left:15.9px;top:171.4px;width:499.8px;height:34.5px"><b>Remedy</b></div>
  <div class="ta" style="left:19.4px;top:179.8px;width:495.4px;height:24.5px"><div>Contact Product Support</div></div>
  <div class="grp" style="left:15.9px;top:214.4px;width:499.8px;height:34.5px"><b>Notes</b></div>
  <div class="ta" style="left:19.4px;top:222.9px;width:495.4px;height:24.5px"></div>
  <div class="grp" style="left:15.9px;top:256.8px;width:499.8px;height:130px;background:#fff"><b>Data</b></div>
  <div id="dt" style="position:absolute;left:18.9px;top:265.7px;width:494.4px;height:70px;">
   <div style="position:absolute;left:0;top:0;width:493.4px;height:17.6px;background:#fbfbfb;box-sizing:border-box;border:1px solid #e2e2e2;"></div>
   <div style="position:absolute;left:206.6px;top:0;width:1px;height:17.6px;background:#dcdcdc"></div>
   <div class="vv" style="left:3.6px;top:4.6px">Key</div>
   <div class="vv" style="left:211px;top:4.6px">Value</div>
   <div class="dr" style="top:17.9px"><i>wid</i><u>COD-NAH-9165544176000609</u></div>
   <div class="dr g" style="top:30.85px"><i>clientname</i><u></u></div>
   <div class="dr" style="top:43.8px"><i>pidnumber</i><u>3001</u></div>
   <div class="dr g" style="top:56.75px"><i>requestor</i><u>Double click to display</u></div>
   <div style="position:absolute;left:207.1px;top:17.9px;width:1px;height:52px;background:#8a8a8a"></div>
   <div style="position:absolute;left:493.4px;top:17.9px;width:1px;height:52px;background:#8a8a8a"></div>
  </div>
 </div>
 <!-- vertical scrollbar -->
 <div style="position:absolute;left:527.1px;top:0;width:11.6px;height:371.7px;background:#fff;"></div>
 <div style="position:absolute;left:527.1px;top:13.1px;width:11.6px;height:218.2px;background:#d8d8d8"></div>
 <svg style="position:absolute;left:527.5px;top:-0.6px" width="12" height="372" viewBox="0 0 12 372">
  <path d="M3.4 9 L5.95 6.3 L8.5 9" fill="none" stroke="#5a5a5a" stroke-width="0.95"/>
  <path d="M3.4 364.9 L5.95 367.6 L8.5 364.9" fill="none" stroke="#5a5a5a" stroke-width="0.95"/><path d="M0 360.6 H11.6" stroke="#d4d4d4" stroke-width="0.8"/>
  <path d="M3.8 120.4 H8.2 M3.8 122 H8.2 M3.8 123.6 H8.2" stroke="#5a5a5a" stroke-width="0.8"/>
 </svg>
 <div style="position:absolute;left:538.7px;top:0;width:1px;height:384px;background:#9cc4cc"></div>
 <!-- horizontal scrollbar -->
 <div style="position:absolute;left:0;top:371.7px;width:527.3px;height:11.6px;background:#fff;"></div>
 <div style="position:absolute;left:13.4px;top:371.7px;width:495.6px;height:11.6px;background:#d8d8d8"></div>
 <div style="position:absolute;left:0;top:383.3px;width:539.7px;height:0.9px;background:#9a9a9a"></div>
 <svg style="position:absolute;left:0;top:371.7px" width="528" height="12" viewBox="0 0 528 12">
  <path d="M8 3.2 L5.4 5.9 L8 8.6" fill="none" stroke="#5a5a5a" stroke-width="0.95"/>
  <path d="M519.4 3.2 L522 5.9 L519.4 8.6" fill="none" stroke="#5a5a5a" stroke-width="0.95"/><path d="M514.9 0 V11.6 M526.7 0 V11.6 M13 0 V11.6" stroke="#d8d8d8" stroke-width="0.8"/>
  <path d="M259.2 3.8 V8 M260.8 3.8 V8 M262.4 3.8 V8" stroke="#5a5a5a" stroke-width="0.8"/>
 </svg>
 <!-- buttons -->
 <div class="btn" style="left:222.3px;top:392.3px;width:45.4px;height:16.3px;background:linear-gradient(#daedfa,#c4e0f5);border:1px solid #62a6da;border-bottom-color:#2f80c6;"><span>Close</span></div>
 <div class="btn" style="left:275.9px;top:392.8px;width:41px;height:15.6px;background:linear-gradient(#e9e9e9,#dadada);border:1px solid #949494;"><span>Help</span></div>
</div>
<!-- redaction blobs over grid -->
<div class="blob" style="left:727.5px;top:321px;width:55px;height:12.2px;border-radius:5px"></div><div class="blob" style="left:739px;top:319.2px;width:42px;height:7px;border-radius:3.5px"></div>
<svg style="position:absolute;left:0;top:0" width="1418" height="606" viewBox="0 0 1418 606">
<path d="M884 443.4 L948 443.4 L953 447 L953.8 458 L947.2 464 L947.2 471 L952.6 476 L954.6 488 L954 498 L948.8 503 L948.8 510 L951.6 515 L951.6 537 L945.8 541 L945.8 548 L942 552.4 L895 552.4 L891.2 548 L891.2 528 L885 522 L886.8 508 L884.8 497 L880.8 487 L880.8 477 L885.8 472 L885.8 464 L880.8 459 L880.8 447 Z" fill="#fff" stroke="#fff" stroke-width="2" stroke-linejoin="round"/>
<ellipse cx="1030.2" cy="583.4" rx="23.6" ry="14" fill="#fff"/>
</svg>

</body></html>
